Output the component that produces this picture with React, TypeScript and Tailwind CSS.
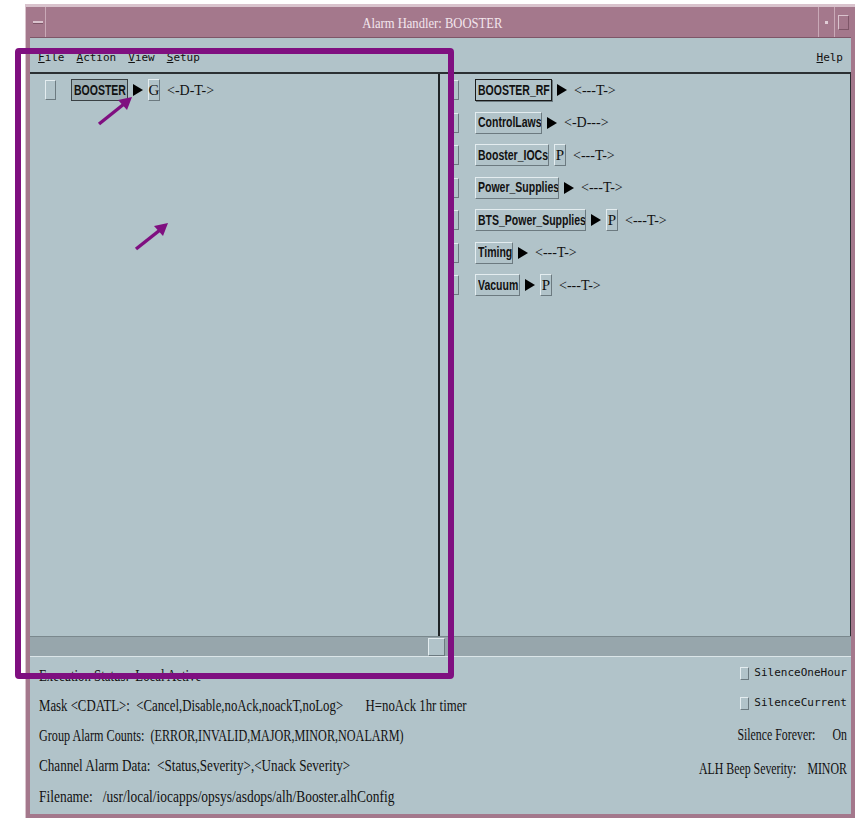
import React from "react";

// Alarm handler main window: group tree on the left, subgroups on the right,
// status lines at the bottom. A purple marker box and two arrows sit on top.

const bevel =
  "border border-t-[#e4edf0] border-l-[#e4edf0] border-b-[#6c7a80] border-r-[#6c7a80]";

const serif = "font-['Liberation_Serif',serif]";
const mono = "font-['DejaVu_Sans_Mono',monospace]";
const sans = "font-['Liberation_Sans',sans-serif]";

type Group = {
  name: string;
  width: string;
  arrow: boolean;
  flag?: string;
  mask: string;
  picked?: boolean;
};

const subGroups: Group[] = [
  { name: "BOOSTER_RF", width: "w-[77px]", arrow: true, mask: "<---T->", picked: true },
  { name: "ControlLaws", width: "w-[67px]", arrow: true, mask: "<-D--->" },
  { name: "Booster_IOCs", width: "w-[74px]", arrow: false, flag: "P", mask: "<---T->" },
  { name: "Power_Supplies", width: "w-[84px]", arrow: true, mask: "<---T->" },
  { name: "BTS_Power_Supplies", width: "w-[111px]", arrow: true, flag: "P", mask: "<---T->" },
  { name: "Timing", width: "w-[38px]", arrow: true, mask: "<---T->" },
  { name: "Vacuum", width: "w-[45px]", arrow: true, flag: "P", mask: "<---T->" },
];

const Arrow = () => (
  <span className="ml-[5px] w-0 h-0 border-y-[6px] border-y-transparent border-l-[10px] border-l-black" />
);

const Flag = ({ c }: { c: string }) => (
  <span className={`ml-[5px] h-[22px] w-[12px] flex items-center justify-center text-[15px] leading-none text-[#111] ${serif} ${bevel}`}>
    {c}
  </span>
);

const Label = ({ text }: { text: string }) => (
  <span className={`block origin-left scale-x-[0.75] whitespace-nowrap text-[14px] font-bold text-[#111] ${sans}`}>
    {text}
  </span>
);

const Mask = ({ text }: { text: string }) => (
  <span className={`ml-[7px] text-[14px] text-[#111] ${serif}`}>{text}</span>
);

const Row = ({ g }: { g: Group }) => (
  <div className="flex items-center h-[32.5px]">
    <span className={`w-[11px] h-[20px] ${bevel}`} />
    <span
      className={`ml-[16px] h-[22px] ${g.width} pl-[2px] flex items-center overflow-hidden ${
        g.picked ? "border border-[#1a1a1a] shadow-[1px_1px_0_#6c7a80]" : bevel
      }`}
    >
      <Label text={g.name} />
    </span>
    {g.arrow && <Arrow />}
    {g.flag && <Flag c={g.flag} />}
    <Mask text={g.mask} />
  </div>
);

const StatusLine = ({ text, scale, h }: { text: string; scale: string; h: string }) => (
  <div className={`${h} flex items-center`}>
    <span className={`block origin-left whitespace-pre ${scale}`}>{text}</span>
  </div>
);

export default function App() {
  return (
    <div className="relative w-[856px] h-[820px] bg-white overflow-hidden">
      {/* window frame */}
      <div className="ml-[25px] mt-[4px] w-[830px] h-[814px] bg-[#a4788c] border-t-[3px] border-t-[#d9c3cd] border-l border-l-[#d9c3cd] flex flex-col px-[4px] pb-[4px]">
        {/* title bar */}
        <div className="h-[31px] flex items-center border-b border-b-[#7e5668]">
          <div className="w-[16px] h-full flex items-center justify-center border-r border-r-[#c9a9b7]">
            <span className="w-[10px] h-[3px] bg-[#d9c3cd] border-b border-b-[#7e5668]" />
          </div>
          <div className="flex-1 flex justify-center pt-[2px]">
            <span className={`block scale-x-[0.84] whitespace-nowrap text-[15px] text-[#f3e6ec] ${serif}`}>
              Alarm Handler: BOOSTER
            </span>
          </div>
          <div className="w-[16px] h-full flex items-center justify-center border-l border-l-[#c9a9b7]">
            <span className="w-[3px] h-[3px] bg-[#e0cdd6]" />
          </div>
          <div className="w-[17px] h-full flex items-center justify-center border-l border-l-[#c9a9b7]">
            <span className="w-[11px] h-[15px] border border-[#d9c3cd] border-b-[#7e5668] border-r-[#7e5668]" />
          </div>
        </div>

        {/* client area */}
        <div className="flex-1 bg-[#b1c3c9] flex flex-col">
          {/* menu bar */}
          <div className={`h-[36px] pt-[6px] flex items-center justify-between px-[8px] text-[11px] text-[#111] border-b-2 border-b-[#2b3033] ${mono}`}>
            <div className="flex gap-[12px]">
              {["File", "Action", "View", "Setup"].map((m) => (
                <span key={m}>
                  <span className="underline">{m[0]}</span>
                  {m.slice(1)}
                </span>
              ))}
            </div>
            <span>
              <span className="underline">H</span>elp
            </span>
          </div>

          {/* tree panes */}
          <div className="h-[562px] flex border-r border-r-[#2b3033]">
            <div className="w-[410px] border-r-2 border-r-[#1e2325] pl-[15px] pt-[5px]">
              <div className="flex items-center h-[22px]">
                <span className={`w-[11px] h-[20px] ${bevel}`} />
                <span className="ml-[15px] h-[22px] w-[57px] pl-[2px] flex items-center overflow-hidden bg-[#9fb0b6] border border-[#3a4144]">
                  <Label text="BOOSTER" />
                </span>
                <Arrow />
                <Flag c="G" />
                <Mask text="<-D-T->" />
              </div>
            </div>
            <div className="flex-1 pl-[8px]">
              {subGroups.map((g) => (
                <Row key={g.name} g={g} />
              ))}
            </div>
          </div>

          {/* horizontal scrollbar */}
          <div className="h-[21px] bg-[#97a6ac] border-y border-t-[#7a888d] border-b-[#dbe5e8] flex items-center pl-[398px]">
            <span className={`w-[17px] h-[18px] bg-[#b1c3c9] ${bevel}`} />
          </div>

          {/* status lines */}
          <div className={`flex-1 flex justify-between pl-[9px] pr-[4px] text-[16px] text-[#111] ${serif}`}>
            <div className="flex flex-col pt-[4px]">
              <StatusLine h="h-[30px]" scale="scale-x-[0.8]" text="Execution Status:  Local Active" />
              <StatusLine
                h="h-[30px]"
                scale="scale-x-[0.8]"
                text="Mask <CDATL>:  <Cancel,Disable,noAck,noackT,noLog>       H=noAck 1hr timer"
              />
              <StatusLine
                h="h-[30px]"
                scale="scale-x-[0.76]"
                text="Group Alarm Counts:  (ERROR,INVALID,MAJOR,MINOR,NOALARM)"
              />
              <StatusLine
                h="h-[30px]"
                scale="scale-x-[0.82]"
                text="Channel Alarm Data:  <Status,Severity>,<Unack Severity>"
              />
              <StatusLine
                h="h-[31px]"
                scale="scale-x-[0.84]"
                text="Filename:   /usr/local/iocapps/opsys/asdops/alh/Booster.alhConfig"
              />
            </div>
            <div className="flex flex-col items-end pt-[1px]">
              {["SilenceOneHour", "SilenceCurrent"].map((s) => (
                <div key={s} className={`h-[30px] flex items-center gap-[5px] text-[11px] ${mono}`}>
                  <span className={`w-[9px] h-[13px] ${bevel}`} />
                  {s}
                </div>
              ))}
              <div className="h-[34px] flex items-center">
                <span className="flex items-center gap-[23px] origin-right scale-x-[0.74] whitespace-nowrap">
                  <span>Silence Forever:</span>
                  <span>On</span>
                </span>
              </div>
              <div className="h-[33px] flex items-center">
                <span className="flex items-center gap-[15px] origin-right scale-x-[0.74] whitespace-nowrap">
                  <span>ALH Beep Severity:</span>
                  <span>MINOR</span>
                </span>
              </div>
            </div>
          </div>
        </div>
      </div>

      {/* marker box */}
      <div className="absolute left-[15px] top-[48px] w-[439px] h-[631px] border-[6px] border-[#7f0f80] rounded-[4px]" />

      {/* marker arrows */}
      <svg className="absolute left-0 top-0" width="856" height="820" viewBox="0 0 856 820">
        <g stroke="#7f0f80" strokeWidth="3.5" fill="#7f0f80">
          <line x1="99" y1="124" x2="124" y2="104" />
          <polygon points="132,97 118,100 127,110" stroke="none" />
          <line x1="136" y1="249" x2="160" y2="230" />
          <polygon points="168,223 154,226 163,236" stroke="none" />
        </g>
      </svg>
    </div>
  );
}
